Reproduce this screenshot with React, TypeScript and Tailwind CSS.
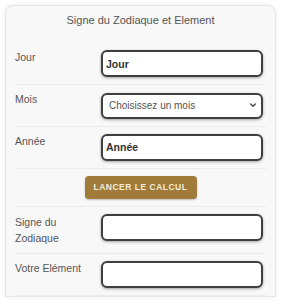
export default function App() {
    const inputCls =
        'w-[162px] h-[27px] px-[3px] border-2 border-[#3f3f3f] rounded-[6px] bg-white shadow-[0_1px_3px_rgba(0,0,0,0.35)] text-[10.5px] font-bold text-[#333] outline-none';
    const labelCls = 'w-[86px] text-[10.5px] leading-[14px] text-[#555]';

    return (
        <div className="min-h-screen bg-white pt-[5px] px-[5px] font-['Liberation_Sans',Arial,sans-serif]">
            <div className="bg-[#f8f8f8] border border-[#e6e6e6] rounded-t-[8px] shadow-[0_0_4px_rgba(0,0,0,0.08)] px-[9px]">
                {/* Title */}
                <div className="h-[37px] pt-[6px] text-center text-[11px] text-[#555]">
                    Signe du Zodiaque et Element
                </div>

                {/* Jour */}
                <div className="flex items-start py-[7px] border-b border-[#ebebeb]">
                    <label className={labelCls}>Jour</label>
                    <input type="text" placeholder="Jour" className={inputCls + ' placeholder:text-[#333]'} />
                </div>

                {/* Mois */}
                <div className="flex items-start py-[7px] border-b border-[#ebebeb]">
                    <label className={labelCls}>Mois</label>
                    <div className="relative">
                        <select
                            defaultValue=""
                            className="w-[162px] h-[26px] pl-[6px] pr-6 border-2 border-[#3f3f3f] rounded-[6px] bg-white shadow-[0_1px_3px_rgba(0,0,0,0.35)] text-[10px] text-[#555] appearance-none outline-none"
                        >
                            <option value="">Choisissez un mois</option>
                            <option>Janvier</option>
                            <option>Février</option>
                            <option>Mars</option>
                        </select>
                        <svg className="absolute right-[6px] top-1/2 -translate-y-1/2 w-[8px] h-[8px] pointer-events-none text-[#444]" fill="none" stroke="currentColor" viewBox="0 0 24 24">
                            <path strokeLinecap="round" strokeLinejoin="round" strokeWidth={4} d="M5 9l7 7 7-7" />
                        </svg>
                    </div>
                </div>

                {/* Année */}
                <div className="flex items-start py-[7px] border-b border-[#ebebeb]">
                    <label className={labelCls}>Année</label>
                    <input type="text" placeholder="Année" className={inputCls + ' placeholder:text-[#333]'} />
                </div>

                {/* Bouton */}
                <div className="flex justify-center py-[7px] border-b border-[#ebebeb]">
                    <button className="w-[112px] h-[23px] rounded-[4px] bg-[#a07b3a] text-[#f5ecda] text-[8.5px] font-bold tracking-[0.5px] uppercase shadow-[0_1px_2px_rgba(0,0,0,0.25)]">
                        Lancer le calcul
                    </button>
                </div>

                {/* Signe */}
                <div className="flex items-start py-[7px] border-b border-[#ebebeb]">
                    <label className="w-[86px] text-[10.5px] leading-[16px] text-[#555]">
                        Signe du
                        <br />
                        Zodiaque
                    </label>
                    <input type="text" readOnly className={inputCls} />
                </div>

                {/* Element */}
                <div className="flex items-start py-[7px] border-b border-[#ebebeb]">
                    <label className={labelCls}>Votre Elément</label>
                    <input type="text" readOnly className={inputCls} />
                </div>
            </div>
        </div>
    );
}
